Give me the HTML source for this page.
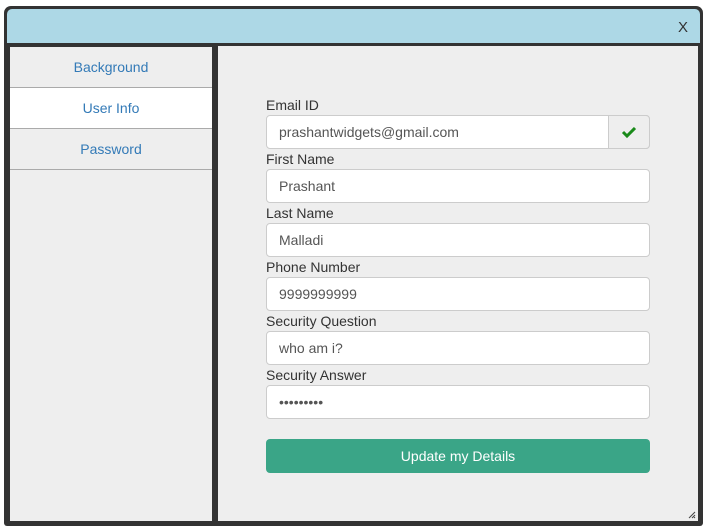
<!DOCTYPE html>
<html><head><style>
*{box-sizing:border-box;margin:0;padding:0}
body{width:708px;height:529px;background:#fff;font-family:"Liberation Sans",sans-serif;font-size:14px;position:relative;overflow:hidden}
.win{position:absolute;left:4px;top:6px;width:699px;height:520px;background:#333;border-radius:7px 7px 3px 3px}
.hdr{position:absolute;left:3px;top:3px;width:693px;height:34px;background:#add8e6;border-radius:5px 5px 0 0}
.x{position:absolute;right:12px;top:10px;color:#333;font-size:15px}
.side{position:absolute;left:6px;top:41px;width:202px;height:474px;background:#eee}
.item{height:41px;border-bottom:1px solid #aaa;text-align:center;line-height:41px;color:#337ab7;font-size:14px}
.item.act{background:#fff}
.main{position:absolute;left:214px;top:40px;width:480px;height:475px;background:#eee}
.grp{position:absolute;left:48px;width:384px}
.lbl{height:20px;line-height:20px;color:#333;font-size:14px}
.inp{height:34px;background:#fff;border:1px solid #ccc;border-radius:4px;padding-left:12px;line-height:32px;color:#555;font-size:14px;position:relative}
.add{position:absolute;right:-1px;top:-1px;width:42px;height:34px;background:#eee;border:1px solid #ccc;border-radius:0 4px 4px 0}
.btn{position:absolute;left:48px;top:393px;width:384px;height:34px;background:#3aa587;border-radius:4px;color:#fff;text-align:center;line-height:34px;font-size:14px}
.grip{position:absolute;right:2px;bottom:2px}
</style></head><body>
<div class="win">
<div class="hdr"><span class="x">X</span></div>
<div class="side">
<div class="item">Background</div>
<div class="item act">User Info</div>
<div class="item">Password</div>
</div>
<div class="main">
<div class="grp" style="top:49px"><div class="lbl">Email ID</div><div class="inp">prashantwidgets@gmail.com<div class="add"><svg width="42" height="34" viewBox="0 0 42 34" style="position:absolute;left:-1px;top:-1px"><path d="M15 17l4 4l8-8" stroke="#1a8a1a" stroke-width="3" fill="none"/></svg></div></div></div>
<div class="grp" style="top:103px"><div class="lbl">First Name</div><div class="inp">Prashant</div></div>
<div class="grp" style="top:157px"><div class="lbl">Last Name</div><div class="inp">Malladi</div></div>
<div class="grp" style="top:211px"><div class="lbl">Phone Number</div><div class="inp">9999999999</div></div>
<div class="grp" style="top:265px"><div class="lbl">Security Question</div><div class="inp">who am i?</div></div>
<div class="grp" style="top:319px"><div class="lbl">Security Answer</div><div class="inp" style="font-size:14px">•••••••••</div></div>
<div class="btn">Update my Details</div>
<svg class="grip" width="8" height="8"><path d="M1 7L7 1M4 7L7 4M6 7L7 6" stroke="#444" stroke-width="1"/></svg>
</div>
</div>
</body></html>
